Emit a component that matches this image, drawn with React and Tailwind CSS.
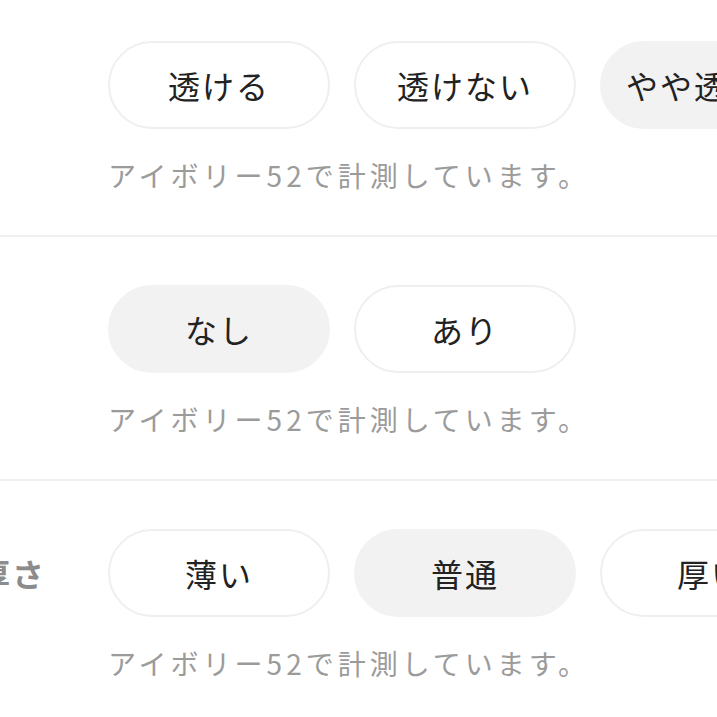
const rows = [
  { label: "", options: ["透ける", "透けない", "やや透ける"], selected: 2 },
  { label: "", options: ["なし", "あり"], selected: 0 },
  { label: "厚さ", options: ["薄い", "普通", "厚い"], selected: 1 },
];

function Option({ text, active }) {
  return (
    <button
      className={
        active
          ? "w-[222px] h-[88px] shrink-0 rounded-full bg-[#f2f2f2] text-[32px] tracking-[2px] text-[#222] border-2 border-[#f2f2f2]"
          : "w-[222px] h-[88px] shrink-0 rounded-full bg-white text-[32px] tracking-[2px] text-[#222] border-2 border-[#efefef]"
      }
    >
      {text}
    </button>
  );
}

export default function App() {
  return (
    <div
      className="w-[717px] h-[717px] overflow-hidden bg-white"
      style={{ fontFamily: '"Noto Sans CJK JP", "Noto Sans", sans-serif' }}
    >
      {rows.map((row, i) => (
        <div
          key={i}
          className={
            i === 0
              ? "flex pt-[41px] pb-[40px]"
              : "flex pt-[48px] pb-[40px] border-t-2 border-[#f0f0f0]"
          }
        >
          <div className="w-[130px] ml-[-22px] shrink-0 h-[88px] flex items-center text-[32px] tracking-[2px] font-semibold text-[#8c8c8c]">
            {row.label}
          </div>
          <div className="flex flex-col">
            <div className="flex gap-[24px]">
              {row.options.map((o, j) => (
                <Option key={o} text={o} active={j === row.selected} />
              ))}
            </div>
            <p className="mt-[26px] text-[28px] leading-[40px] tracking-[4px] text-[#9b9b9b] whitespace-nowrap">
              アイボリー52で計測しています。
            </p>
          </div>
        </div>
      ))}
    </div>
  );
}
